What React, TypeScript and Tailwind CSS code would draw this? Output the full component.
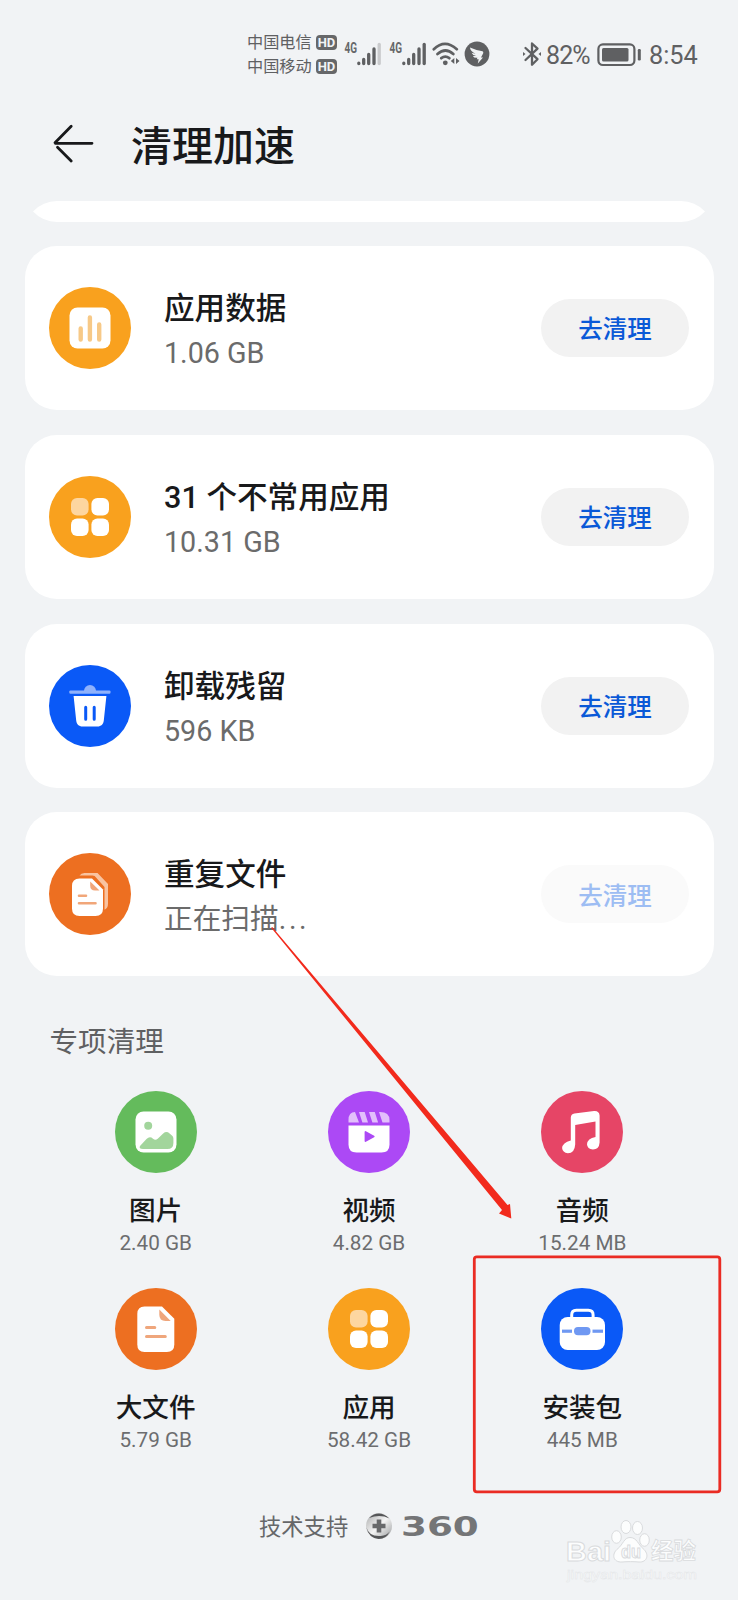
import type { ReactNode } from "react";

const Disc = ({ color, children }: { color: string; children: ReactNode }) => (
  <svg viewBox="0 0 82 82" className="h-[82px] w-[82px] shrink-0">
    <circle cx="41" cy="41" r="41" fill={color} />
    {children}
  </svg>
);

const ChartIcon = () => (
  <Disc color="#f9a11e">
    <rect x="20.5" y="20.5" width="41" height="41" rx="8" fill="#fff" />
    <g stroke="#f7c987" strokeWidth="4.4" strokeLinecap="round">
      <path d="M31.7 41.5v11M40.9 30.5v22M50.2 37.5v15" />
    </g>
  </Disc>
);

const AppsIcon = () => (
  <Disc color="#f9a11e">
    <rect x="22" y="22" width="17.6" height="17.6" rx="6" fill="#fdd6a0" />
    <rect x="42.4" y="22" width="17.6" height="17.6" rx="6" fill="#fff" />
    <rect x="22" y="42.4" width="17.6" height="17.6" rx="6" fill="#fff" />
    <rect x="42.4" y="42.4" width="17.6" height="17.6" rx="6" fill="#fff" />
  </Disc>
);

const TrashIcon = () => (
  <Disc color="#0a59f7">
    <path d="M35 26a6 6 0 0 1 12 0z" fill="#8fb2fc" />
    <rect x="20.3" y="25.4" width="41.2" height="3.4" rx="1.2" fill="#8fb2fc" />
    <path d="M24.6 31h32.8l-2.6 24.4c-.4 3.8-2.6 6-6.4 6H33.6c-3.8 0-6-2.2-6.4-6z" fill="#fff" />
    <path d="M36.7 42.2v12M45.2 42.2v12" stroke="#0a59f7" strokeWidth="3" strokeLinecap="round" />
  </Disc>
);

const CopiesIcon = () => (
  <Disc color="#ed6f21">
    <path
      d="M30.5 22.5q1.5-2.5 5-2.5H48.5L59 31v19.5q0 5-3.5 6.2V34L47 24.5q-1-2-3.5-2z"
      fill="#f9c3a0"
    />
    <path
      d="M30.5 25.5H43L54 36.500V55.500q0 7.500-7.500 7.500H30.500q-7.500 0-7.500-7.500V33q0-7.500 7.500-7.500z"
      fill="#fff"
    />
    <path d="M41.2 28.500L50.500 37.600H46q-4.800 0-4.800-4.800z" fill="#f1a679" />
    <path d="M30 42.800h7M30 50.200h16.500" stroke="#f1a679" strokeWidth="2.6" strokeLinecap="round" />
  </Disc>
);

const FileIcon = () => (
  <Disc color="#ed6f21">
    <path
      d="M29.5 18.5H47L59.3 30.7V56.5q0 7.5-7.5 7.5H29.500q-7.200 0-7.200-7.500V26q0-7.500 7.200-7.500z"
      fill="#fff"
    />
    <path d="M44.3 21.5L55.7 32.9H50.5q-6.200 0-6.200-6.200z" fill="#efa67c" />
    <path d="M31.5 39.6h8.3M31.5 48.4h18.800" stroke="#efa67c" strokeWidth="3" strokeLinecap="round" />
  </Disc>
);

const PhotoIcon = () => (
  <Disc color="#64bb5c">
    <rect x="20.5" y="20.5" width="41" height="41" rx="8" fill="#fff" />
    <circle cx="33.2" cy="34.8" r="4" fill="#a2d59c" />
    <path
      d="M25 55l6.5-7q3.300-3.200 6.500-.3 2.400 2.300 4.700 0l5.500-5.200q3.200-2.700 6.400-.1l2.600 2.300q1.200 1.100 1.200 2.800v4.500q0 6-6 6H28q-4.500 0-3-3z"
      fill="#a2d59c"
    />
  </Disc>
);

const VideoIcon = () => (
  <Disc color="#ac49f5">
    <path d="M20.5 31.5v-2.5q0-8 6.500-8l4 10.500zM31 21h5.700l3.300 10.500h-5.600zM41 21h5.800l3.300 10.500h-5.700zM51 21q10.500-.5 10.500 8v2.500h-7z" fill="#e2bffb" />
    <path d="M20.5 34.5h41V53.5q0 8-8 8H28.500q-8 0-8-8z" fill="#fff" />
    <path d="M37.5 41v9l8.200-4.500z" fill="#ac49f5" stroke="#ac49f5" strokeWidth="1.8" strokeLinejoin="round" />
  </Disc>
);

const MusicIcon = () => (
  <Disc color="#e64566">
    <path
      d="M29.8 26.6q.2-3.400 3.600-4.100l19.600-2.500q5.200-.4 5.600 4.600V51.500q-.5 7-6.700 7-5.700-.6-5.900-5.300.4-5.800 8.500-7.300V30.600L34.200 34V53.500q-.6 8.800-7.300 8.800-5.400-.6-5.800-5.200.4-5.700 8.700-7.700z"
      fill="#fff"
    />
  </Disc>
);

const PackageIcon = () => (
  <Disc color="#0a59f7">
    <path d="M30.7 30.5V27q0-4.800 4.600-4.800h12q4.800 0 4.800 4.800v3.500" fill="none" stroke="#fff" strokeWidth="3" />
    <rect x="18.7" y="29" width="45.3" height="33" rx="8" fill="#fff" />
    <rect x="21" y="41.6" width="10" height="3.2" fill="#6f98f2" />
    <rect x="51.5" y="41.6" width="10.5" height="3.2" fill="#6f98f2" />
    <rect x="33" y="39" width="16.5" height="8.3" rx="4" fill="#6f98f2" />
  </Disc>
);

const cards = [
  { icon: <ChartIcon />, title: "应用数据", sub: "1.06 GB", dots: "", disabled: false },
  { icon: <AppsIcon />, title: "31 个不常用应用", sub: "10.31 GB", dots: "", disabled: false },
  { icon: <TrashIcon />, title: "卸载残留", sub: "596 KB", dots: "", disabled: false },
  { icon: <CopiesIcon />, title: "重复文件", sub: "正在扫描", dots: "...", disabled: true },
];

const tiles = [
  { icon: <PhotoIcon />, label: "图片", size: "2.40 GB" },
  { icon: <VideoIcon />, label: "视频", size: "4.82 GB" },
  { icon: <MusicIcon />, label: "音频", size: "15.24 MB" },
  { icon: <FileIcon />, label: "大文件", size: "5.79 GB" },
  { icon: <AppsIcon />, label: "应用", size: "58.42 GB" },
  { icon: <PackageIcon />, label: "安装包", size: "445 MB" },
];

const Carrier = ({ name }: { name: string }) => (
  <div className="flex h-6 items-center gap-1">
    <span className="w-[65px] pt-px text-[16.2px] leading-[22px] whitespace-nowrap">{name}</span>
    <span className="flex h-[15px] w-[21px] items-center justify-center rounded-[4px] bg-[#666769] text-[13px] leading-none font-bold text-[#f1f3f5]">
      HD
    </span>
  </div>
);

const Signal = ({ weak }: { weak: boolean }) => (
  <svg viewBox="0 0 38 26" className="h-[26px] w-[38px]">
    <text x="0.5" y="12" fontSize="14" fontWeight="700" textLength="12.5" lengthAdjust="spacingAndGlyphs" fill="#666769">
      4G
    </text>
    <g stroke="#5f6062" strokeWidth="3.3" strokeLinecap="round">
      <path d="M14.8 22.2v.4M19.7 18.5v4.100M24.700 13.500v9.100M30 8v14.600" />
      <path d="M35.2 3.5v19.100" stroke={weak ? "#c9cacc" : "#5f6062"} />
    </g>
  </svg>
);

const StatusBar = () => (
  <header className="flex h-[90px] items-start pt-[31px] pl-[247px] text-[#5f6062]">
    <div className="-mt-px flex flex-col">
      <Carrier name="中国电信" />
      <Carrier name="中国移动" />
    </div>
    <div className="mt-[10px] ml-[7px] flex">
      <Signal weak />
      <div className="ml-[7px]">
        <Signal weak={false} />
      </div>
      <svg viewBox="0 0 28 26" className="ml-[5px] h-[26px] w-7" fill="none" stroke="#5f6062" strokeLinecap="round">
        <path d="M1.8 8.2q11-10.500 23 0M5.500 13q8-7 15.800 0M9.300 17.200q4-3 8 0" strokeWidth="2.7" />
        <circle cx="13.3" cy="21.8" r="2.4" fill="#5f6062" stroke="none" />
        <path d="M22.3 17v6l-3.500-3zM24 17v6l3.500-3z" fill="#5f6062" stroke="none" />
      </svg>
      <svg viewBox="0 0 26 26" className="ml-1 h-[26px] w-[26px]">
        <circle cx="13" cy="13" r="12.4" fill="#5f6062" />
        <path d="M6 6.5q6 2.800 12.500 3.800 1.200.5.700 2l-2.200 4.200h2l-5.200 6 .9-4.200h-1.900q.2-1 .7-1.600-3.600.4-4.600-1.800 1.600.4 3-.1-3.500-.5-4.300-3 2 .8 3.900.7Q6.400 10.700 6 6.500z" fill="#f1f3f5" />
      </svg>
      <svg viewBox="0 0 20 26" className="ml-8 h-[26px] w-5" fill="none" stroke="#5f6062" strokeWidth="2.3" strokeLinejoin="round" strokeLinecap="round">
        <path d="M3.500 7l12 11.200-5.500 5.500V2.500l5.500 5.200-12 11.300" />
        <path d="M1 11v4l2.500-2zM19 11v4l-2.500-2z" fill="#5f6062" stroke="none" />
      </svg>
    </div>
    <span className="mt-[10px] ml-1 w-[49px] text-[25px] leading-[30px] tracking-[-0.9px]">82%</span>
    <svg viewBox="0 0 46 24" className="mt-3 ml-[2px] h-6 w-[46px]">
      <rect x="1.4" y="1.4" width="36" height="20.6" rx="4.5" fill="none" stroke="#5f6062" strokeWidth="2.2" />
      <rect x="5" y="5" width="26.5" height="13.6" rx="1.5" fill="#5f6062" />
      <rect x="40.8" y="6" width="3" height="11.5" rx="1.2" fill="#5f6062" />
    </svg>
    <span className="mt-[10px] ml-[6px] text-[25.3px] leading-[30px]">8:54</span>
  </header>
);

const Footer = () => (
  <footer className="flex h-[60px] items-center pl-[259px] text-[#666769]">
    <span className="w-[90px] pt-[2px] text-[22.3px] whitespace-nowrap">技术支持</span>
    <svg viewBox="0 0 28 28" className="ml-4 h-7 w-7">
      <defs>
        <linearGradient id="ball" x1="0" y1="0" x2="1" y2="1">
          <stop offset="0" stopColor="#a8a9aa" />
          <stop offset=".5" stopColor="#f4f4f4" />
          <stop offset="1" stopColor="#989a9b" />
        </linearGradient>
      </defs>
      <circle cx="14" cy="14" r="13" fill="url(#ball)" />
      <path d="M4 6Q14-3 24.500 6.500 15 2 4 6zM1.200 15q3 10 14.500 9 6-.5 9-4.500-3.500 7.500-11 7.500Q3.500 26 1.200 15z" fill="#555658" />
      <path d="M11.700 7.500h4.600v4.200h4.200v4.600h-4.200v4.200h-4.600v-4.200H7.500v-4.600h4.200z" fill="#68696b" />
    </svg>
    <span className="ml-[8px] w-[78px] origin-left scale-x-[1.380] font-['DejaVu_Sans'] text-[27px] leading-none font-bold text-[#747577]">
      360
    </span>
  </footer>
);

const Watermark = () => (
  <svg viewBox="0 0 140 70" className="absolute top-[1515px] left-[562px] h-[70px] w-[140px] font-['Liberation_Sans','Noto_Sans_CJK_SC',sans-serif]">
    <g fill="#fcfdfd" stroke="#d9dbdd" strokeWidth="1" fontWeight="700">
      <text x="4" y="46" fontSize="28" textLength="45" lengthAdjust="spacingAndGlyphs">Bai</text>
      <ellipse cx="54.5" cy="22" rx="4.8" ry="6.3" />
      <ellipse cx="64" cy="12" rx="5" ry="6.5" />
      <ellipse cx="75.5" cy="13" rx="5" ry="6.5" />
      <ellipse cx="82.5" cy="25" rx="4.8" ry="6.3" />
      <path d="M68 22.500c7 0 8 7 13 11 7 6 4 14-4 13.500-5-.5-12-.5-17 0-9 .5-11-8-4-13.500 5-4 6-11 12-11z" />
      <text x="59" y="43" fontSize="18" textLength="20" lengthAdjust="spacingAndGlyphs">du</text>
      <text x="89" y="44" fontSize="22.5" strokeWidth="0.8">经验</text>
    </g>
    <text x="5" y="64" fontSize="13" textLength="130" lengthAdjust="spacingAndGlyphs" fill="#fcfdfd" stroke="#e4e6e8" strokeWidth="0.5">
      jingyan.baidu.com
    </text>
  </svg>
);

export default function App() {
  return (
    <div className="relative h-[1600px] w-[738px] overflow-hidden bg-[#f1f3f5] font-['Roboto','Noto_Sans_CJK_SC',sans-serif] text-[#18191b]">
      <StatusBar />

      <div className="flex h-[111px] items-start pt-[23px] pl-[53px]">
        <svg viewBox="0 0 42 40" className="mt-[10px] h-10 w-[42px]" fill="none" stroke="#18191b" strokeWidth="2.8" strokeLinecap="round" strokeLinejoin="round">
          <path d="M39 20.3H2.300M18.200 3.200L2 19.800M4.500 24.200L18.200 38" />
        </svg>
        <h1 className="mt-[2px] ml-9 text-[41px] leading-[64px] font-medium">清理加速</h1>
      </div>

      <svg viewBox="0 0 672 21" className="ml-[33px] h-[21px] w-[672px]">
        <path d="M0 10.5Q10 0 24 0H648Q662 0 672 10.500 662 21 648 21H24Q10 21 0 10.500z" fill="#fff" />
      </svg>

      <main className="mt-6 flex flex-col gap-[24.8px] px-[24.5px]">
        {cards.map((card) => (
          <section key={card.title} className="flex h-[164px] items-center rounded-[32px] bg-white px-[24.5px]">
            {card.icon}
            <div className="ml-[33px] flex-1 pt-[6px]">
              <h2 className="text-[30.6px] leading-[45px] font-medium whitespace-nowrap">{card.title}</h2>
              <p className="text-[28.7px] leading-[45px] text-[#6b6b6b]">
                {card.sub}
                <span className="tracking-[2.6px]">{card.dots}</span>
              </p>
            </div>
            <button
              className={
                card.disabled
                  ? "h-[58px] w-[148px] rounded-full bg-[#fafafa] pt-[5px] text-[24.5px] font-medium text-[#9dbdf3]"
                  : "h-[58px] w-[148px] rounded-full bg-[#f2f2f2] pt-[5px] text-[24.5px] font-medium text-[#0a59d7]"
              }
            >
              去清理
            </button>
          </section>
        ))}
      </main>

      <h3 className="mt-[46px] pl-[49.5px] text-[28.6px] leading-10 text-[#5f6062]">专项清理</h3>

      <div className="mt-[29px] grid grid-cols-3 gap-y-[25px] px-[49px]">
        {tiles.map((tile) => (
          <div key={tile.label} className="flex h-[172px] flex-col items-center">
            {tile.icon}
            <span className="mt-[18px] text-[26.6px] leading-10 font-medium">{tile.label}</span>
            <span className="text-[20.7px] leading-6 text-[#6c6d6f]">{tile.size}</span>
          </div>
        ))}
      </div>

      <div className="mt-[36px]">
        <Footer />
      </div>

      <svg viewBox="0 0 738 1600" className="pointer-events-none absolute inset-0 h-[1600px] w-[738px]">
        <path d="M271.2 927.8L272.2 927 507.500 1205 510 1204 511.300 1218.500 499 1213.500 502 1210z" fill="#f22a1c" />
        <rect x="474.3" y="1256.8" width="245.5" height="235" rx="2.5" fill="none" stroke="#ea2b23" strokeWidth="2.8" />
      </svg>
      <Watermark />
    </div>
  );
}
